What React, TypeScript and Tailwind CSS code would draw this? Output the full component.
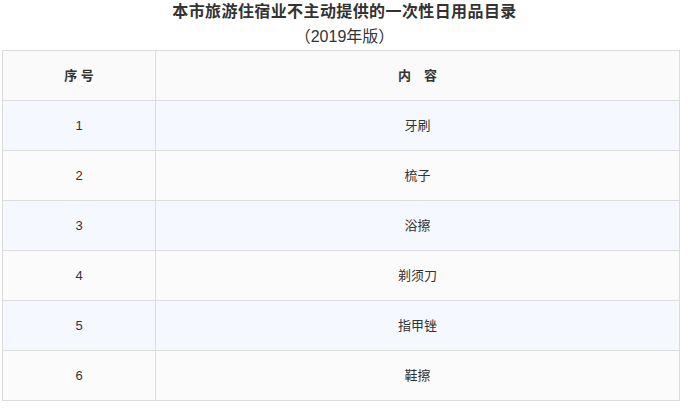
import React from "react";

const rows = [
  ["1", "牙刷"],
  ["2", "梳子"],
  ["3", "浴擦"],
  ["4", "剃须刀"],
  ["5", "指甲锉"],
  ["6", "鞋擦"],
];

export default function App() {
  return (
    <div
      className="w-[689px] h-[408px] bg-white text-[#333]"
      style={{ fontFamily: '"Liberation Sans", "Noto Sans CJK SC", sans-serif' }}
    >
      <div className="pt-[1px] text-center text-[16px] font-bold leading-[21px] tracking-[0.4px]">
        本市旅游住宿业不主动提供的一次性日用品目录
      </div>
      <div className="mt-[4px] text-center text-[16px] leading-[21px]">（2019年版）</div>
      <div className="mt-[3px] ml-[2px] w-[678px]">
        <table className="w-full border-collapse border border-[#dcdcdc] text-[13px]">
          <colgroup>
            <col className="w-[153px]" />
            <col />
          </colgroup>
          <thead>
            <tr className="h-[50px] bg-[#fafafa]">
              <th className="border border-[#dcdcdc] font-bold">序 号</th>
              <th className="border border-[#dcdcdc] font-bold">内{"\u3000"}容</th>
            </tr>
          </thead>
          <tbody>
            {rows.map(([n, t], i) => (
              <tr key={n} className={i % 2 === 0 ? "h-[50px] bg-[#f5f8ff]" : "h-[50px] bg-[#fbfbfb]"}>
                <td className="border border-[#dcdcdc] text-center">{n}</td>
                <td className="border border-[#dcdcdc] text-center">{t}</td>
              </tr>
            ))}
          </tbody>
        </table>
      </div>
    </div>
  );
}
